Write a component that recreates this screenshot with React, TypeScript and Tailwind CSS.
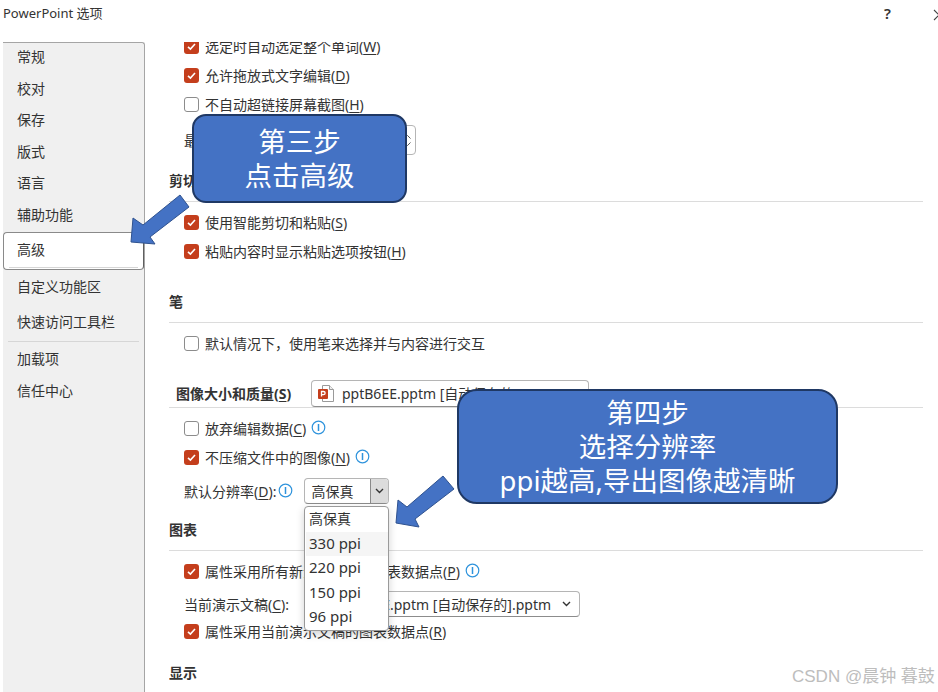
import type { ReactNode } from 'react';

const FONT = "font-['Noto_Sans','Noto_Sans_CJK_SC',sans-serif]";

function Key({ k }: { k: string }) {
  return (
    <span>
      (<span className="underline underline-offset-2">{k}</span>)
    </span>
  );
}

function CheckBox({ on }: { on: boolean }) {
  if (!on) return <span className="block w-[15px] h-[15px] shrink-0 rounded-[3px] border border-[#8c8c8c] bg-white" />;
  return (
    <span className="flex items-center justify-center w-[15px] h-[15px] shrink-0 rounded-[3px] bg-[#c43e1c]">
      <svg width="11" height="11" viewBox="0 0 11 11" fill="none" stroke="#fff" strokeWidth="1.6">
        <path d="M2 5.8 4.4 8 9 3" />
      </svg>
    </span>
  );
}

function Info({ className = '' }: { className?: string }) {
  return (
    <svg className={`shrink-0 ${className}`} width="15" height="15" viewBox="0 0 15 15" fill="none" stroke="#2e93dc">
      <circle cx="7.5" cy="7.5" r="6.3" strokeWidth="1.2" />
      <path d="M7.5 4v7" strokeWidth="1.5" />
    </svg>
  );
}

function PptIcon() {
  return (
    <svg width="19" height="19" viewBox="0 0 19 19" className="shrink-0">
      <path d="M5.5 1.5h7l4 4v12h-11z" fill="#fff" stroke="#9a9a9a" />
      <path d="M12.5 1.5v4h4" fill="#eee" stroke="#9a9a9a" />
      <rect x="1" y="5" width="10" height="10" rx="1" fill="#c43e1c" />
      <path d="M4.5 12.5v-5h2a1.5 1.5 0 0 1 0 3.2h-2" fill="none" stroke="#fff" strokeWidth="1.3" />
    </svg>
  );
}

function Chevron({ color = '#333' }: { color?: string }) {
  return (
    <svg width="9" height="6" viewBox="0 0 9 6" fill="none" stroke={color} strokeWidth="1.4">
      <path d="M1 1l3.5 3.5L8 1" />
    </svg>
  );
}

function CheckRow({ on, children, info, className = '' }: { on: boolean; children: ReactNode; info?: boolean; className?: string }) {
  return (
    <div className={`flex items-center h-[29px] pl-[15px] ${className}`}>
      <CheckBox on={on} />
      <span className="ml-[6px] whitespace-nowrap">{children}</span>
      {info && <Info className="ml-[5px] -mt-[3px]" />}
    </div>
  );
}

function Heading({ children, className = '' }: { children: ReactNode; className?: string }) {
  return (
    <div className={`h-[33px] pt-px border-b border-[#dcdcdc] font-bold leading-[22px] ${className}`}>{children}</div>
  );
}

function NavItem({ label }: { label: string }) {
  return <div className="h-[31.5px] pl-[14px] leading-[28px]">{label}</div>;
}

function Sidebar() {
  return (
    <aside className="ml-[3px] w-[142px] shrink-0 h-full bg-[#f0f0f0] border-t border-r border-[#a5a5a5] rounded-tr-[3px]">
      {['常规', '校对', '保存', '版式', '语言', '辅助功能'].map((l) => (
        <NavItem key={l} label={l} />
      ))}
      <div className="h-[38px] w-[141px] -mr-px pl-[13px] leading-[34px] bg-white rounded-[4px] border border-[#8a8a8a] border-r-[#5f5f5f] relative">
        高级
        <span className="absolute left-[5px] right-[5px] bottom-[1px] h-px bg-[#d6d6d6]" />
      </div>
      <div className="mt-[3px]">
        <NavItem label="自定义功能区" />
      </div>
      <div className="mt-[3.5px]">
        <NavItem label="快速访问工具栏" />
      </div>
      <div className="mx-[5px] mt-[1px] h-px bg-[#d6d6d6]" />
      <div className="mt-[3.5px]">
        <NavItem label="加载项" />
      </div>
      <NavItem label="信任中心" />
    </aside>
  );
}

function Options() {
  return (
    <main className="flex-1 ml-[24px] mr-[15px] min-w-0 overflow-hidden h-full">
      <div className="-mt-[10px]">
        <CheckRow on>选定时自动选定整个单词<Key k="W" /></CheckRow>
        <CheckRow on>允许拖放式文字编辑<Key k="D" /></CheckRow>
        <CheckRow on={false}>不自动超链接屏幕截图<Key k="H" /></CheckRow>
      </div>

      <div className="mt-[6px] h-[30px] pl-[15px] flex items-center justify-between w-[247px]">
        <span className="whitespace-nowrap">最多取消操作数<Key k="U" />:</span>
        <span className="flex flex-col items-end justify-center gap-[3px] w-[46px] h-[30px] pr-[4px] rounded-[4px] border border-[#b5b5b5]">
          <svg width="7" height="4" viewBox="0 0 7 4" fill="none" stroke="#555">
            <path d="M.5 3.5l3-3 3 3" />
          </svg>
          <svg width="7" height="4" viewBox="0 0 7 4" fill="none" stroke="#555">
            <path d="M.5.5l3 3 3-3" />
          </svg>
        </span>
      </div>

      <Heading className="mt-[14px]">剪切、复制和粘贴</Heading>
      <CheckRow on className="mt-[6px]">使用智能剪切和粘贴<Key k="S" /></CheckRow>
      <CheckRow on>粘贴内容时显示粘贴选项按钮<Key k="H" /></CheckRow>

      <Heading className="mt-[24px] h-[32px]">笔</Heading>
      <CheckRow on={false} className="mt-[6px]">默认情况下，使用笔来选择并与内容进行交互</CheckRow>

      <div className="mt-[21px] h-[29px] pt-px pl-[7px] flex items-start border-b border-[#dcdcdc]">
        <span className="font-bold leading-[28px] whitespace-nowrap w-[135px]">图像大小和质量<Key k="S" /></span>
        <div className="flex items-center w-[278px] h-[27px] rounded-[4px] border border-[#b5b5b5] border-b-[#8c8c8c] pl-[5px] bg-white overflow-hidden">
          <PptIcon />
          <span className="ml-[6px] whitespace-nowrap text-[#333]">pptB6EE.pptm [自动保存的].pptm</span>
        </div>
      </div>

      <CheckRow on={false} info className="mt-[6px]">放弃编辑数据<Key k="C" /></CheckRow>
      <CheckRow on info>不压缩文件中的图像<Key k="N" /></CheckRow>

      <div className="mt-[3px] h-[32px] pl-[15px] flex items-center">
        <span className="whitespace-nowrap">默认分辨率<Key k="D" />:</span>
        <Info className="ml-[2px] -mt-[2px]" />
        <div className="ml-[11px] w-[85px] h-[26px] rounded-[4px] border border-[#b5b5b5] border-b-[#8c8c8c] flex items-center justify-between pl-[6px] overflow-hidden">
          <span>高保真</span>
          <span className="flex items-center justify-center w-[18px] h-full bg-[#dcdcdc] border-l border-[#8a8a8a]">
            <Chevron />
          </span>
        </div>
      </div>

      <Heading className="mt-[11px]">图表</Heading>
      <CheckRow on info className="mt-[6px]">属性采用所有新演示文稿的图表数据点<Key k="P" /></CheckRow>

      <div className="mt-[3px] h-[30px] pl-[15px] flex items-center">
        <span className="whitespace-nowrap w-[120px]">当前演示文稿<Key k="C" />:</span>
        <div className="w-[276px] h-[26px] rounded-[4px] border border-[#b5b5b5] border-b-[#8c8c8c] flex items-center justify-between pl-[5px] pr-[8px] overflow-hidden">
          <PptIcon />
          <span className="ml-[6px] flex-1 whitespace-nowrap">pptB6EE.pptm [自动保存的].pptm</span>
          <Chevron />
        </div>
      </div>
      <CheckRow on className="-mt-[2px]">属性采用当前演示文稿的图表数据点<Key k="R" /></CheckRow>

      <Heading className="mt-[15px] border-b-0">显示</Heading>
    </main>
  );
}

function ResolutionMenu() {
  return (
    <div className="absolute left-[304px] top-[506px] w-[85px] h-[125px] bg-white rounded-[4px] border border-[#9a9a9a] shadow-[0_3px_8px_rgba(0,0,0,0.18)] pl-px">
      {['高保真', '330 ppi', '220 ppi', '150 ppi', '96 ppi'].map((t, i) => (
        <div
          key={t}
          className={`h-[24.5px] pl-[3px] leading-[23px] whitespace-nowrap ${i === 0 ? '' : 'text-[15px]'} ${i === 1 ? 'bg-[#f5f5f5]' : ''}`}
        >
          {t}
        </div>
      ))}
    </div>
  );
}

function Callout({ className, lines }: { className: string; lines: string[] }) {
  return (
    <div className={`absolute flex flex-col items-center justify-center bg-[#4472c4] border-2 border-[#1f3864] text-white text-[27.5px] leading-[34px] whitespace-nowrap ${className}`}>
      {lines.map((l) => (
        <div key={l}>{l}</div>
      ))}
    </div>
  );
}

function Arrows() {
  return (
    <svg className="absolute left-0 top-0 pointer-events-none" width="938" height="692" fill="#4472c4" stroke="#2f528f" strokeWidth="1">
      <polygon points="180,195 189,207 150,237 155,244 131,242 133,218 143,225" />
      <polygon points="443,476 454,489 415,519 419,527 396,523 398,500 407,507" />
    </svg>
  );
}

export default function App() {
  return (
    <div className={`relative w-[938px] h-[692px] overflow-hidden bg-white text-[14px] text-[#333] ${FONT}`}>
      <header className="h-[42px] pl-[3px] pt-[3px] flex items-start">
        <span className="w-[881px] shrink-0 text-[13px] leading-[20px] whitespace-nowrap">PowerPoint 选项</span>
        <span className="w-[8px] shrink-0 leading-[20px] font-semibold text-[15px]">?</span>
        <svg className="ml-[41px] mt-[6px] shrink-0" width="12" height="12" viewBox="0 0 12 12" fill="none" stroke="#444" strokeWidth="1.1">
          <path d="M1 1l10 10M11 1 1 11" />
        </svg>
      </header>

      <div className="flex h-[650px]">
        <Sidebar />
        <Options />
      </div>

      <ResolutionMenu />
      <Arrows />
      <Callout className="left-[192px] top-[114px] w-[215px] h-[89px] rounded-[14px]" lines={['第三步', '点击高级']} />
      <Callout className="left-[457px] top-[389px] w-[381px] h-[115px] pt-px rounded-[20px]" lines={['第四步', '选择分辨率', 'ppi越高,导出图像越清晰']} />

      <div className="absolute left-[792px] top-[666px] text-[17px] leading-[22px] text-[#bdbdbd] whitespace-nowrap font-['Liberation_Sans','Noto_Sans_CJK_SC',sans-serif]">
        CSDN @晨钟 暮鼓
      </div>
    </div>
  );
}
